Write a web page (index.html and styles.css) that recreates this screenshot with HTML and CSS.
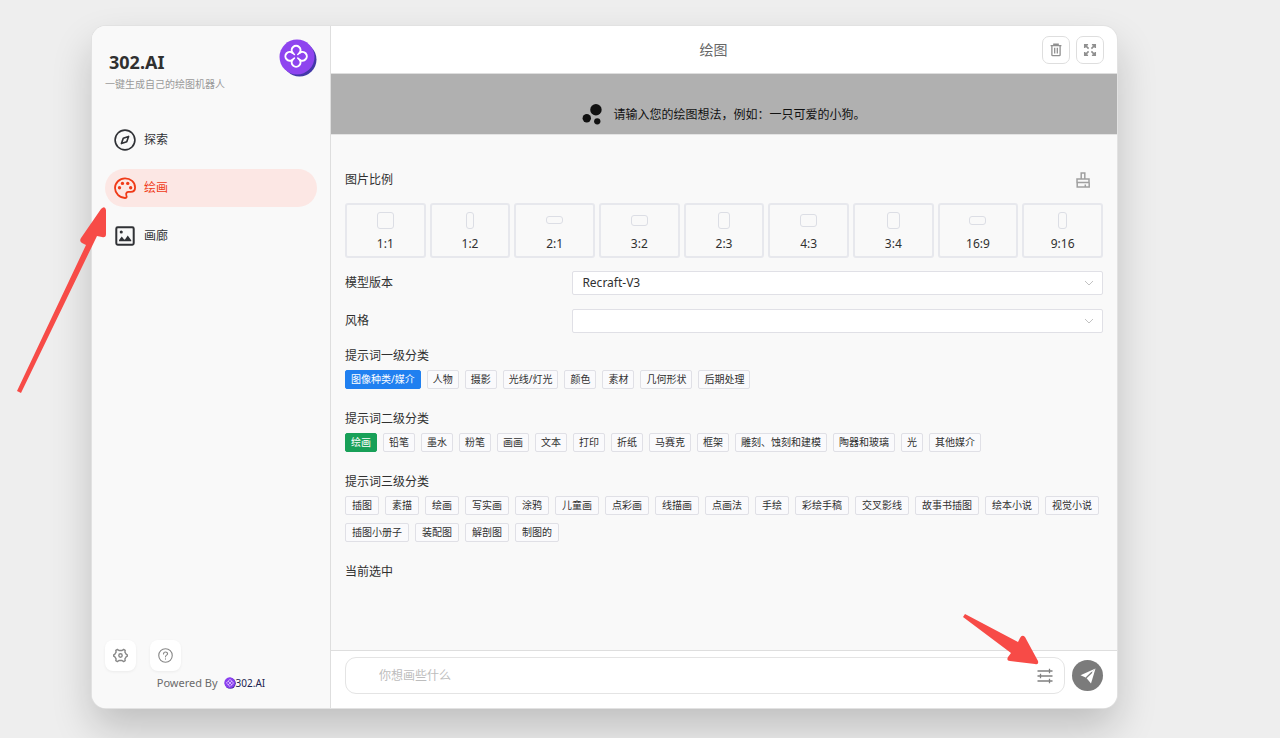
FILE: index.html
```
<!DOCTYPE html>
<html lang="zh-CN">
<head>
<meta charset="utf-8">
<meta name="viewport" content="width=device-width, initial-scale=1">
<title>302.AI 绘图</title>
<link rel="stylesheet" href="styles.css">
</head>
<body>
<div class="window">
  <aside class="sidebar">
    <header class="brand">
      <div class="brand-text">
        <h1 class="brand-name">302.AI</h1>
        <p class="brand-sub">一键生成自己的绘图机器人</p>
      </div>
      <svg class="brand-logo" viewBox="0 0 38 38" aria-hidden="true">
        <circle cx="20.5" cy="20.5" r="17" fill="#4338a8"/>
        <circle cx="18" cy="18" r="17.5" fill="#8e44ef"/>
        <path d="M13.6 13.9a4.400 4.400 0 1 1 7 0a4.400 4.400 0 1 1 0 6.800a4.400 4.400 0 1 1-7 0a4.400 4.400 0 1 1 0-6.800Z" fill="none" stroke="#fff" stroke-width="2" stroke-linejoin="round"/>
        <path d="M13.600 13.900l1.800 1.600M20.600 13.900l-1.800 1.600M13.600 20.700l1.800-1.600M20.600 20.700l-1.800-1.600" stroke="#fff" stroke-width="1.600" stroke-linecap="round"/>
      </svg>
    </header>
    <nav class="nav">
      <a class="nav-item" href="#explore">
        <svg class="nav-icon" viewBox="0 0 24 24" fill="none" stroke="currentColor" stroke-width="1.800" aria-hidden="true"><circle cx="12" cy="12" r="10.800"/><path d="M15.900 8.100l-2 5.800-5.800 2 2-5.800z" stroke-linejoin="round"/></svg>
        <span>探索</span>
      </a>
      <a class="nav-item nav-item-active" href="#draw">
        <svg class="nav-icon" viewBox="0 0 24 24" fill="none" stroke="currentColor" stroke-width="2" aria-hidden="true"><path d="M12 1.500C6 1.500 1.100 6.300 1.100 12S6 22.900 12 22.900c1.500 0 2.100-1 1.700-2.100-.4-1.300-.9-2.500-.1-3.500.6-.8 1.400-1 2.400-1h2.300c2.700 0 4.700-1.900 4.700-4.800C23 5.600 18 1.500 12 1.500z"/><g fill="currentColor" stroke="none"><circle cx="6" cy="11.700" r="1.800"/><circle cx="9.200" cy="7" r="1.800"/><circle cx="15" cy="7" r="1.800"/><circle cx="18.200" cy="11.700" r="1.800"/></g></svg>
        <span>绘画</span>
      </a>
      <a class="nav-item" href="#gallery">
        <svg class="nav-icon" viewBox="0 0 24 24" aria-hidden="true"><rect x="2.500" y="2.500" width="19" height="19" rx="1.500" fill="none" stroke="currentColor" stroke-width="2.200"/><circle cx="7.900" cy="7.700" r="1.700" fill="currentColor"/><path d="M5.500 17.800v-1.500l3-3.800 2.500 3.200h1l3-4.200 3.800 5v1.300z" fill="currentColor"/></svg>
        <span>画廊</span>
      </a>
    </nav>
    <footer class="sidebar-foot">
      <div class="foot-buttons">
        <button class="foot-button" type="button" aria-label="设置">
          <svg viewBox="0 0 16 16" fill="none" stroke="currentColor" stroke-width="1.500" stroke-linejoin="round" aria-hidden="true"><path d="M4.700 1.500L6.300 2.700H9.700L11.300 1.500 13 2.500 12.700 4.400 14.200 6.800 15.300 7.300V8.700L14.200 9.200 12.700 11.600 13 13.500 11.300 14.500 9.700 13.300H6.300L4.700 14.500 3 13.500 3.300 11.600 1.800 9.200.7 8.700V7.300L1.800 6.800 3.300 4.400 3 2.500z"/><circle cx="8" cy="8" r="1.800"/></svg>
        </button>
        <button class="foot-button" type="button" aria-label="帮助">
          <svg viewBox="0 0 16 16" fill="none" stroke="currentColor" stroke-width="1.200" stroke-linecap="round" aria-hidden="true"><circle cx="8" cy="8" r="7.200"/><path d="M5.900 6.400C5.900 3.600 10.200 3.700 10.200 6.200 10.200 7.700 8 7.600 8 9.400M8 11.600v.2"/></svg>
        </button>
      </div>
      <div class="powered">
        <span>Powered By</span>
        <span class="powered-brand">
          <svg class="powered-logo" viewBox="0 0 12 12" aria-hidden="true"><circle cx="6.300" cy="6.300" r="5.500" fill="#4b2fa8"/><circle cx="5.700" cy="5.700" r="5.400" fill="#8a3ff0"/><path d="M6 2.300L9.500 6 6 9.500 2.400 6zM4 4l4 4M8 4L4 8" fill="none" stroke="#e3cdfd" stroke-width=".8"/></svg>
          302.AI
        </span>
      </div>
    </footer>
  </aside>

  <main class="main">
    <header class="topbar">
      <h2 class="topbar-title">绘图</h2>
      <div class="topbar-actions">
        <button class="square-button" type="button" aria-label="清空">
          <svg viewBox="0 0 16 16" fill="none" stroke="currentColor" stroke-width="1.500" aria-hidden="true"><path d="M1.800 3h12.400M5.500 2.800V1.400h5v1.400M3.300 3.400v10.200q0 .9.900.9h7.600q.9 0 .9-.9V3.400M6.500 5.500v6.500M9.500 5.500v6.500"/></svg>
        </button>
        <button class="square-button" type="button" aria-label="全屏">
          <svg viewBox="0 0 16 16" fill="none" stroke="currentColor" stroke-width="1.800" aria-hidden="true"><path d="M2 5.800V2h3.800M2.400 2.400l4 4M10.200 2H14v3.800M13.600 2.400l-4 4M2 10.200V14h3.800M2.400 13.600l4-4M10.200 14H14v-3.800M13.600 13.600l-4-4"/></svg>
        </button>
      </div>
    </header>

    <section class="hint">
      <svg class="hint-icon" viewBox="0 0 22 22" fill="#111" aria-hidden="true"><circle cx="14.600" cy="6" r="6"/><circle cx="5" cy="15" r="4.400"/><circle cx="16" cy="18.200" r="3.300"/></svg>
      <p class="hint-text">请输入您的绘图想法，例如：一只可爱的小狗。</p>
    </section>

    <section class="panel">
      <div class="panel-head">
        <h3 class="label">图片比例</h3>
        <button class="clear-button" type="button" aria-label="清除">
          <svg viewBox="0 0 16 16" fill="none" stroke="currentColor" stroke-width="1.500" aria-hidden="true"><path d="M6.200 7V1h3.600v6M2 7h12v3.600H2zM2.200 10.600v4.400h12v-4.400M10.300 12.600v2.300"/></svg>
        </button>
      </div>

      <div class="ratios">
        <button class="ratio" type="button"><span class="shape-box"><span class="shape shape-1-1"></span></span>1:1</button>
        <button class="ratio" type="button"><span class="shape-box"><span class="shape shape-1-2"></span></span>1:2</button>
        <button class="ratio" type="button"><span class="shape-box"><span class="shape shape-2-1"></span></span>2:1</button>
        <button class="ratio" type="button"><span class="shape-box"><span class="shape shape-3-2"></span></span>3:2</button>
        <button class="ratio" type="button"><span class="shape-box"><span class="shape shape-2-3"></span></span>2:3</button>
        <button class="ratio" type="button"><span class="shape-box"><span class="shape shape-4-3"></span></span>4:3</button>
        <button class="ratio" type="button"><span class="shape-box"><span class="shape shape-3-4"></span></span>3:4</button>
        <button class="ratio" type="button"><span class="shape-box"><span class="shape shape-16-9"></span></span>16:9</button>
        <button class="ratio" type="button"><span class="shape-box"><span class="shape shape-9-16"></span></span>9:16</button>
      </div>

      <div class="field">
        <label class="label" for="model">模型版本</label>
        <div class="select-wrap">
          <select class="select" id="model"><option>Recraft-V3</option></select>
          <svg class="chevron" viewBox="0 0 10 10" fill="none" stroke="currentColor" aria-hidden="true"><path d="M1 3l4 4 4-4"/></svg>
        </div>
      </div>
      <div class="field">
        <label class="label" for="style">风格</label>
        <div class="select-wrap">
          <select class="select" id="style"><option></option></select>
          <svg class="chevron" viewBox="0 0 10 10" fill="none" stroke="currentColor" aria-hidden="true"><path d="M1 3l4 4 4-4"/></svg>
        </div>
      </div>

      <div class="group">
        <h3 class="label">提示词一级分类</h3>
        <div class="tags">
          <button class="tag tag-blue" type="button">图像种类/媒介</button><button class="tag" type="button">人物</button><button class="tag" type="button">摄影</button><button class="tag" type="button">光线/灯光</button><button class="tag" type="button">颜色</button><button class="tag" type="button">素材</button><button class="tag" type="button">几何形状</button><button class="tag" type="button">后期处理</button>
        </div>
      </div>
      <div class="group">
        <h3 class="label">提示词二级分类</h3>
        <div class="tags">
          <button class="tag tag-green" type="button">绘画</button><button class="tag" type="button">铅笔</button><button class="tag" type="button">墨水</button><button class="tag" type="button">粉笔</button><button class="tag" type="button">画画</button><button class="tag" type="button">文本</button><button class="tag" type="button">打印</button><button class="tag" type="button">折纸</button><button class="tag" type="button">马赛克</button><button class="tag" type="button">框架</button><button class="tag" type="button">雕刻、蚀刻和建模</button><button class="tag" type="button">陶器和玻璃</button><button class="tag" type="button">光</button><button class="tag" type="button">其他媒介</button>
        </div>
      </div>
      <div class="group">
        <h3 class="label">提示词三级分类</h3>
        <div class="tags tags-wide">
          <button class="tag" type="button">插图</button><button class="tag" type="button">素描</button><button class="tag" type="button">绘画</button><button class="tag" type="button">写实画</button><button class="tag" type="button">涂鸦</button><button class="tag" type="button">儿童画</button><button class="tag" type="button">点彩画</button><button class="tag" type="button">线描画</button><button class="tag" type="button">点画法</button><button class="tag" type="button">手绘</button><button class="tag" type="button">彩绘手稿</button><button class="tag" type="button">交叉影线</button><button class="tag" type="button">故事书插图</button><button class="tag" type="button">绘本小说</button><button class="tag" type="button">视觉小说</button><button class="tag" type="button">插图小册子</button><button class="tag" type="button">装配图</button><button class="tag" type="button">解剖图</button><button class="tag" type="button">制图的</button>
        </div>
      </div>
      <div class="group">
        <h3 class="label">当前选中</h3>
      </div>
    </section>

    <form class="composer">
      <div class="prompt">
        <input class="prompt-input" type="text" placeholder="你想画些什么" aria-label="绘图想法">
        <button class="options-button" type="button" aria-label="选项">
          <svg viewBox="0 0 16 16" fill="none" stroke="currentColor" stroke-width="1.300" aria-hidden="true"><path d="M.5 3h15M.5 8h15M.5 13h15M12.500 .8v4.400M3.500 5.800v4.400M12.500 10.800v4.400"/></svg>
        </button>
      </div>
      <button class="send" type="button" aria-label="发送">
        <svg viewBox="0 0 16 16" fill="none" aria-hidden="true"><path d="M15.500.5L.5 7.200l5.700 2.600L15.500.5z" fill="#fff"/><path d="M15.500.5l-4.500 15-4.800-5.700z" fill="#fff"/><path d="M6.200 9.800L12 4.200" stroke="#7b7b7b" stroke-width="1.200"/></svg>
      </button>
    </form>
  </main>
</div>

<svg class="arrow arrow-nav" viewBox="0 0 92 188" aria-hidden="true"><path d="M1 185L70 39l-4-2q-3-2-1-5L85 3q4-4 5 1v24q0 4-4 3l-5-1L5 187z"/></svg>
<svg class="arrow arrow-options" viewBox="0 0 78 52" aria-hidden="true"><path d="M3 1l53 28 2-4q2-4 5-1l13 24q1 4-3 3l-25-3q-4 0-2-4l3-4L1 4z"/></svg>
</body>
</html>
```
FILE: styles.css
```
* {
  box-sizing: border-box;
}

body {
  margin: 0;
  min-height: 100vh;
  display: flex;
  padding: 26px 163px 30px 92px;
  background: #eeeeee;
  color: #303030;
  font-family: "Noto Sans", "Noto Sans CJK SC", sans-serif;
  font-size: 12px;
  line-height: 18px;
}

h1,
h2,
h3,
p {
  margin: 0;
  font-weight: 400;
}

button,
input,
select {
  margin: 0;
  padding: 0;
  color: inherit;
  font: inherit;
}

button {
  display: flex;
  align-items: center;
  justify-content: center;
  border: 0;
  background: none;
  cursor: pointer;
}

.window {
  flex: 1;
  min-width: 0;
  display: flex;
  overflow: hidden;
  border-radius: 14px;
  background: #ffffff;
  box-shadow: 0 0 0 1px #e2e2e2, 0 20px 40px rgba(0, 0, 0, 0.2);
}

/* Sidebar */
.sidebar {
  flex: 0 0 239px;
  display: flex;
  flex-direction: column;
  padding: 13px 13px 16px;
  border-right: 1px solid #dedede;
  background: #f9f9f9;
}

.brand {
  display: flex;
  justify-content: space-between;
}

.brand-text {
  padding-top: 11px;
}

.brand-name {
  padding-left: 4px;
  font-size: 18px;
  font-weight: 700;
  line-height: 24px;
}

.brand-sub {
  color: #9a9a9a;
  font-size: 10px;
  line-height: 21px;
}

.brand-logo {
  width: 38px;
  height: 38px;
}

.nav {
  display: flex;
  flex-direction: column;
  gap: 10px;
  margin-top: 26px;
}

.nav-item {
  display: flex;
  align-items: center;
  gap: 8px;
  height: 38px;
  padding: 0 9px;
  border-radius: 19px;
  color: #303236;
  text-decoration: none;
}

.nav-item-active {
  background: #fce7e4;
  color: #f03a17;
}

.nav-icon {
  width: 22px;
  height: 22px;
}

.sidebar-foot {
  margin-top: auto;
}

.foot-buttons {
  display: flex;
  gap: 14px;
}

.foot-button {
  width: 31px;
  height: 31px;
  border-radius: 8px;
  background: #ffffff;
  color: #888888;
  box-shadow: 0 1px 3px rgba(0, 0, 0, 0.06);
}

.foot-button svg {
  width: 15px;
  height: 15px;
}

.powered {
  display: flex;
  justify-content: center;
  gap: 6px;
  margin-top: 3px;
  color: #6b6b6b;
  font-size: 11px;
}

.powered-brand {
  display: flex;
  align-items: center;
  color: #1c2350;
  font-size: 10px;
}

.powered-logo {
  width: 12px;
  height: 12px;
}

/* Main column */
.main {
  flex: 1;
  min-width: 0;
  display: flex;
  flex-direction: column;
}

.topbar {
  display: grid;
  grid-template-columns: 1fr auto 1fr;
  align-items: center;
  height: 48px;
  padding: 0 13px;
  border-bottom: 1px solid #dedede;
}

.topbar-title {
  grid-column: 2;
  padding-right: 21px;
  color: #666666;
  font-size: 14px;
  line-height: 20px;
}

.topbar-actions {
  display: flex;
  justify-content: flex-end;
  gap: 6px;
}

.square-button {
  width: 28px;
  height: 28px;
  border: 1px solid #dedede;
  border-radius: 7px;
  background: #ffffff;
  color: #909090;
}

.square-button svg {
  width: 14px;
  height: 14px;
}

.hint {
  display: flex;
  justify-content: center;
  gap: 10px;
  height: 60px;
  padding-top: 30px;
  background: #b0b0b0;
  color: #111111;
}

.hint-icon {
  width: 21px;
  height: 21px;
}

.hint-text {
  line-height: 22px;
}

.panel {
  flex: 1;
  padding: 35px 14px 14px;
  border-top: 1px solid #e4e4e4;
  background: #f9f9f9;
}

.label {
  font-size: 12px;
  line-height: 18px;
}

.panel-head {
  display: flex;
  align-items: center;
  justify-content: space-between;
  height: 20px;
  margin-bottom: 13px;
  padding-right: 12px;
}

.clear-button {
  width: 17px;
  height: 17px;
  color: #a0a0a0;
}

.clear-button svg {
  width: 16px;
  height: 16px;
}

.ratios {
  display: grid;
  grid-template-columns: repeat(9, 1fr);
  gap: 4px;
}

.ratio {
  flex-direction: column;
  justify-content: flex-start;
  height: 55px;
  padding-top: 6px;
  border: 2px solid #e7e8ed;
  border-radius: 3px;
}

.shape-box {
  display: flex;
  align-items: center;
  justify-content: center;
  height: 18px;
  margin-bottom: 6px;
}

.shape {
  border: 1px solid #dcdee5;
  border-radius: 3px;
}

.shape-1-1 {
  width: 17px;
  height: 17px;
}

.shape-1-2 {
  width: 8px;
  height: 17px;
}

.shape-2-1 {
  width: 17px;
  height: 8px;
}

.shape-3-2 {
  width: 17px;
  height: 11px;
}

.shape-2-3 {
  width: 12px;
  height: 17px;
}

.shape-4-3 {
  width: 17px;
  height: 13px;
}

.shape-3-4 {
  width: 13px;
  height: 17px;
}

.shape-16-9 {
  width: 17px;
  height: 9px;
}

.shape-9-16 {
  width: 9px;
  height: 17px;
}

.field {
  display: grid;
  grid-template-columns: 3fr 7fr;
  align-items: center;
  margin-top: 14px;
}

.ratios + .field {
  margin-top: 13px;
}

.select-wrap {
  position: relative;
}

.select {
  display: block;
  width: 100%;
  height: 24px;
  padding: 0 24px 0 9px;
  appearance: none;
  border: 1px solid #e0e0e6;
  border-radius: 2px;
  background: #ffffff;
}

.chevron {
  position: absolute;
  top: 7px;
  right: 9px;
  width: 10px;
  height: 10px;
  color: #c2c2c2;
  pointer-events: none;
}

.group {
  margin-top: 21px;
}

.field + .group {
  margin-top: 14px;
}

.tags {
  display: flex;
  flex-wrap: wrap;
  gap: 8px 6px;
  margin-top: 5px;
}

.tag {
  height: 19px;
  padding: 0 5px;
  border: 1px solid #e0e0e6;
  border-radius: 2px;
  background: #fafafc;
  font-size: 10px;
  line-height: 17px;
  white-space: nowrap;
}

.tags-wide .tag {
  padding: 0 6px;
}

.tag-blue {
  border-color: #2080f0;
  background: #2080f0;
  color: #ffffff;
}

.tag-green {
  border-color: #18a058;
  background: #18a058;
  color: #ffffff;
}

/* Composer */
.composer {
  display: flex;
  align-items: center;
  gap: 7px;
  padding: 6px 14px 14px;
  border-top: 1px solid #dedede;
  background: #ffffff;
}

.prompt {
  flex: 1;
  display: flex;
  align-items: center;
  height: 37px;
  padding: 0 11px 0 33px;
  border: 1px solid #e4e4e4;
  border-radius: 11px;
}

.prompt-input {
  flex: 1;
  min-width: 0;
  border: 0;
  outline: 0;
  background: none;
}

.prompt-input::placeholder {
  color: #bdbdbd;
}

.options-button {
  color: #808080;
}

.options-button svg {
  width: 16px;
  height: 16px;
}

.send {
  width: 31px;
  height: 31px;
  border-radius: 50%;
  background: #7b7b7b;
}

.send svg {
  width: 16px;
  height: 16px;
}

/* Callout arrows over the window */
.arrow {
  position: absolute;
  fill: #f74b47;
}

.arrow-nav {
  left: 16px;
  top: 206px;
  width: 92px;
  height: 188px;
}

.arrow-options {
  left: 962px;
  top: 613px;
  width: 78px;
  height: 52px;
}
```
